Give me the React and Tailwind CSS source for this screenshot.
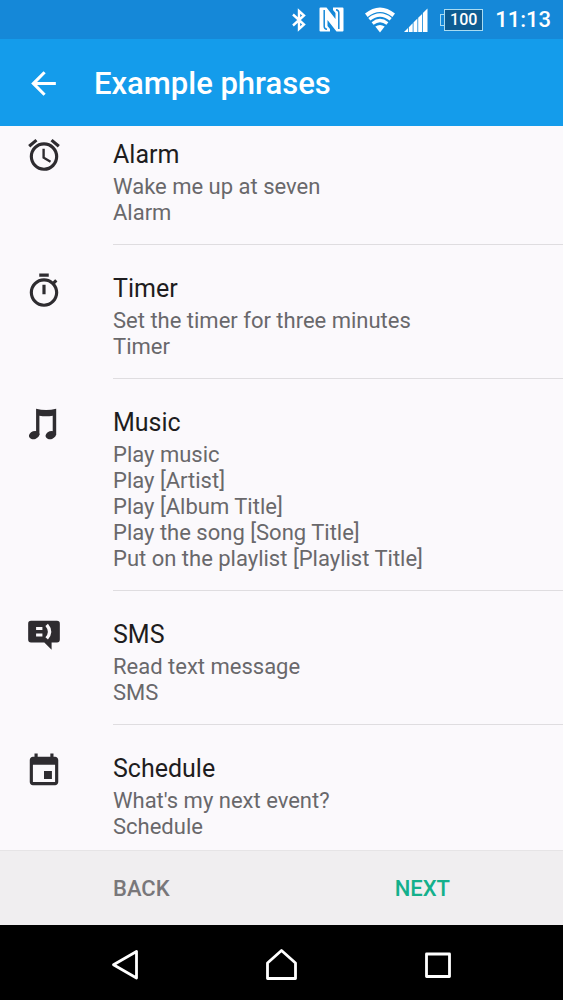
const icons = {
  alarm: (
    <path d="M22 5.72l-4.6-3.86-1.29 1.53 4.6 3.86L22 5.72zM7.88 3.39L6.6 1.86 2 5.71l1.29 1.53 4.59-3.85zM12.5 8H11v6l4.75 2.85.75-1.23-4-2.37V8zM12 4c-4.97 0-9 4.03-9 9s4.02 9 9 9a9 9 0 0 0 0-18zm0 16c-3.87 0-7-3.13-7-7s3.13-7 7-7 7 3.13 7 7-3.13 7-7 7z" />
  ),
  timer: (
    <path d="M15 1H9v2h6V1zm-4 13h2V8h-2v6zm8.03-6.61l1.42-1.42c-.43-.51-.9-.99-1.41-1.41l-1.42 1.42C16.07 4.74 14.12 4 12 4c-4.97 0-9 4.03-9 9s4.02 9 9 9 9-4.03 9-9c0-2.12-.74-4.07-1.97-5.61zM12 20c-3.87 0-7-3.13-7-7s3.13-7 7-7 7 3.13 7 7-3.13 7-7 7z" />
  ),
  music: (
    <>
      <path d="M7 1.7Q13.3 3.5 19.7 1.7V18.3H17.5V6.1Q13.3 7 9.1 6.1V18.3H7z" />
      <ellipse cx="5.8" cy="18.4" rx="3.4" ry="2.5" transform="rotate(-18 5.8 18.4)" />
      <ellipse cx="16.3" cy="18.4" rx="3.4" ry="2.5" transform="rotate(-18 16.3 18.4)" />
    </>
  ),
  sms: (
    <>
      <path d="M3.8 1.8h16.4A1.8 1.8 0 0 1 22 3.6v10a1.8 1.8 0 0 1-1.8 1.8h-3.4V20l-4.6-4.6H3.8A1.8 1.8 0 0 1 2 13.6V3.6a1.8 1.8 0 0 1 1.8-1.8z" />
      <path d="M7 6.600h4M7 10.700h4" fill="none" stroke="#fbf9fc" strokeWidth="1.900" />
      <path d="M13.700 4.300q3.600 4.300 0 8.600" fill="none" stroke="#fbf9fc" strokeWidth="2.100" />
    </>
  ),
  schedule: (
    <path d="M17 12h-5v5h5v-5zM16 1v2H8V1H6v2H5c-1.11 0-1.99.9-1.99 2L3 19c0 1.1.89 2 2 2h14c1.1 0 2-.9 2-2V5c0-1.1-.9-2-2-2h-1V1h-2zm3 18H5V8h14v11z" />
  ),
};

const groups = [
  { title: 'Alarm', icon: 'alarm', phrases: ['Wake me up at seven', 'Alarm'] },
  { title: 'Timer', icon: 'timer', phrases: ['Set the timer for three minutes', 'Timer'] },
  {
    title: 'Music',
    icon: 'music',
    phrases: [
      'Play music',
      'Play [Artist]',
      'Play [Album Title]',
      'Play the song [Song Title]',
      'Put on the playlist [Playlist Title]',
    ],
  },
  { title: 'SMS', icon: 'sms', phrases: ['Read text message', 'SMS'] },
  { title: 'Schedule', icon: 'schedule', phrases: ["What's my next event?", 'Schedule'] },
];

function StatusBar() {
  return (
    <div className="flex h-[39px] shrink-0 items-center justify-end bg-[#1588d8] pr-3 text-white">
      <svg className="mr-3 h-6 w-4" viewBox="0 0 16 24" fill="none" stroke="currentColor" strokeWidth="2.400">
        <path d="M2 6.500L13 16.500L8 21V3L13 7.500L2 17.500" />
      </svg>
      <svg className="mr-5 h-[25px] w-[25px]" viewBox="0 0 25 25" fill="currentColor">
        <path d="M1.500 .5H7.500L16.500 12V6L14 3V.5H23.500Q24.500 .5 24.500 1.500V23.500Q24.500 24.500 23.500 24.500H17.500L8.500 13V19L11 22V24.500H1.500Q.5 24.500 .5 23.500V1.500Q.5 .5 1.500 .5z" />
        <path d="M5.200 3V19.500Q5.400 22 8 22.300M19.800 22V5.500Q19.600 3 17 2.700" fill="none" stroke="#1588d8" strokeWidth="1.500" />
      </svg>
      <svg className="mr-2 h-[26px] w-8" viewBox="0 0 32 26" fill="none" stroke="currentColor">
        <path d="M1 6.500Q16-5.500 31 6.500L28.400 10Q16 0 3.600 10z" fill="currentColor" stroke="none" />
        <path d="M5.300 12.200Q16 3.800 26.700 12.200" strokeWidth="3.300" />
        <path d="M8.600 16.400Q16 10.600 23.400 16.400" strokeWidth="3.200" />
        <path d="M11.300 19.600Q16 16.300 20.700 19.600L16 25.500z" fill="currentColor" stroke="none" />
      </svg>
      <svg className="mr-3 h-6 w-6" viewBox="0 0 24 24" fill="currentColor">
        <path d="M0 24L4 20V24zM4.800 19.200L8.700 15.300V24H4.800zM9.500 14.500L13.400 10.600V24H9.500zM14.200 9.800L18.100 5.900V24H14.200zM18.900 5.100L23.500 .5V24H18.900z" />
      </svg>
      <div className="mr-3 flex h-[22px] items-center">
        <div className="h-3 w-1 border border-r-0 border-[#a9dcf2]" />
        <div className="flex h-[22px] w-[39px] items-center justify-center border border-[#a9dcf2] bg-[#0d5c92] text-base font-medium">
          100
        </div>
      </div>
      <span className="text-[22px] font-medium">11:13</span>
    </div>
  );
}

function PhraseGroup({ title, icon, phrases }) {
  return (
    <li className="group flex gap-[50px] pl-[25px] pt-[27px] first:pt-[10px]">
      <svg className="size-[38px] shrink-0" viewBox="0 0 24 24" fill="currentColor" aria-hidden="true">
        {icons[icon]}
      </svg>
      <div className="flex-1 border-b border-[#dfdde0] pb-[18px] pt-0.5 group-first:pt-1 group-last:border-b-0 group-last:pb-2">
        <h2 className="mb-1 text-[25px] leading-[30px] text-[#1e1d20]">{title}</h2>
        {phrases.map((phrase) => (
          <p key={phrase} className="text-[22px] leading-[26px] text-[#69686b]">
            {phrase}
          </p>
        ))}
      </div>
    </li>
  );
}

export default function App() {
  return (
    <div className="flex h-screen flex-col bg-[#fbf9fc] font-['Roboto',sans-serif] text-[#2e2c30]">
      <StatusBar />
      <header className="flex h-[87px] shrink-0 items-center gap-8 bg-[#149ceb] pl-[25px] pt-0.5 text-white">
        <button type="button" aria-label="Navigate up">
          <svg className="size-[37px]" viewBox="0 0 24 24" fill="currentColor">
            <path d="M20 11H7.830l5.590-5.590L12 4l-8 8 8 8 1.410-1.410L7.830 13H20v-2z" />
          </svg>
        </button>
        <h1 className="text-[31px] font-medium leading-9">Example phrases</h1>
      </header>
      <main className="min-h-0 flex-1 overflow-y-auto">
        <ul>
          {groups.map((group) => (
            <PhraseGroup key={group.title} {...group} />
          ))}
        </ul>
      </main>
      <footer className="flex h-[75px] shrink-0 items-center justify-between border-t border-[#e6e4e6] bg-[#f0eef0] px-[113px] text-[22px] font-medium">
        <button type="button" className="text-[#79777a]">BACK</button>
        <button type="button" className="text-[#14b08c]">NEXT</button>
      </footer>
      <nav className="flex h-[75px] shrink-0 items-center justify-center gap-[120px] bg-black pt-1 text-white">
        <button type="button" aria-label="Back">
          <svg className="size-9" viewBox="0 0 36 36" fill="none" stroke="currentColor" strokeWidth="2.800" strokeLinejoin="round">
            <path d="M28.500 4.500V31L5.500 17.700z" />
          </svg>
        </button>
        <button type="button" aria-label="Home">
          <svg className="size-9" viewBox="0 0 36 36" fill="none" stroke="currentColor" strokeWidth="2.800" strokeLinejoin="round">
            <path d="M17.500 3.500L31.500 16V31.500H3.500V16z" />
          </svg>
        </button>
        <button type="button" aria-label="Recent apps">
          <svg className="size-9" viewBox="0 0 36 36" fill="none" stroke="currentColor" strokeWidth="2.800" strokeLinejoin="round">
            <path d="M6.500 7H29.500V29.500H6.500z" />
          </svg>
        </button>
      </nav>
    </div>
  );
}
